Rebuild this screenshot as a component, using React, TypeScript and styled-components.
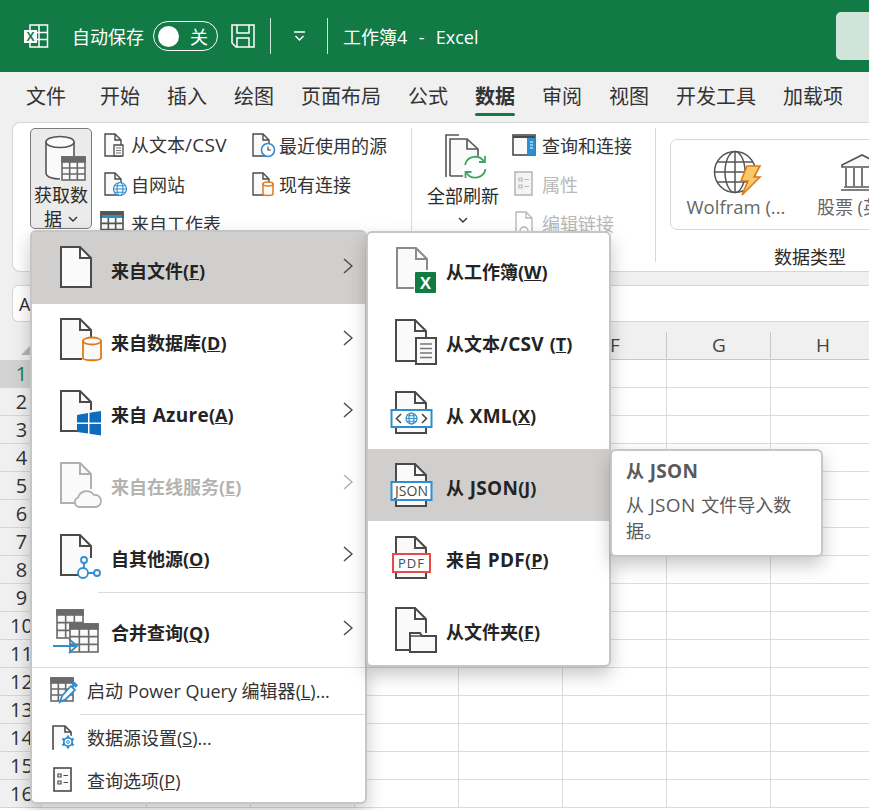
import { styled, createGlobalStyle } from "styled-components";
import type { ReactNode } from "react";

const FONT = `"Open Sans", "Noto Sans CJK SC", sans-serif`;
const INK = "#4a4a4a";
const BLUE = "#2e8fd0";
const ORANGE = "#e07a17";
const MUTED = "#b8b8b8";

const GlobalStyle = createGlobalStyle`
    html, body {
        margin: 0;
        padding: 0;
        width: 869px;
        height: 810px;
        overflow: hidden;
        background: #fff;
        font-family: ${FONT};
    }
`;

const Page = styled.div`
    position: relative;
    width: 869px;
    height: 810px;
    overflow: hidden;
    display: flex;
    flex-direction: column;
    background: #f0f0f0;
    color: #2b2b2b;
`;

/* latin runs sit a little larger next to the CJK text, as they do in the ribbon font */
const Latin = styled.span`
    font-size: 19px;
    letter-spacing: 0.3px;
`;

const TypeName = styled.span`
    font-size: 18.5px;
`;

/* ---------- title bar ---------- */

const TitleBar = styled.header`
    height: 72px;
    flex: none;
    display: flex;
    align-items: center;
    padding-left: 24px;
    background: #117a45;
    color: #fff;
    font-size: 18px;
    overflow: hidden;
`;

const AutoSave = styled.span`
    margin-left: 24px;
`;

const Toggle = styled.span`
    box-sizing: border-box;
    margin: 0 13px 0 9px;
    width: 65px;
    height: 30px;
    border: 1.5px solid #fff;
    border-radius: 15px;
    display: flex;
    align-items: center;
    padding: 0 9px 0 4px;
    justify-content: space-between;

    &::before {
        content: "";
        width: 21px;
        height: 21px;
        border-radius: 50%;
        background: #fff;
    }
`;

const TitleDivider = styled.span<{ $left: number; $right: number }>`
    width: 1px;
    height: 36px;
    background: #cfe4d9;
    margin: 0 ${(p) => p.$right}px 0 ${(p) => p.$left}px;
`;

const WindowTitle = styled.span`
    white-space: pre;
    word-spacing: 1px;
    margin-left: 15px;
`;

const SearchBox = styled.div`
    margin-left: auto;
    margin-right: -30px;
    flex: none;
    width: 63px;
    height: 48px;
    border-radius: 5px;
    background: #d0e4d9;
`;

/* ---------- tabs ---------- */

const TabRow = styled.nav`
    height: 50px;
    flex: none;
    display: flex;
    gap: 27px;
    padding-left: 26px;
    font-size: 20px;
`;

const Tab = styled.span<{ $active?: boolean; $extra?: number }>`
    position: relative;
    line-height: 50px;
    color: #333;
    font-weight: ${(p) => (p.$active ? 700 : 400)};
    margin-right: ${(p) => p.$extra ?? 0}px;

    ${(p) =>
        p.$active &&
        `&::after {
            content: "";
            position: absolute;
            left: 0;
            right: 0;
            bottom: 6px;
            height: 3px;
            border-radius: 2px;
            background: #117a45;
        }`}
`;

/* ---------- ribbon ---------- */

const Ribbon = styled.section`
    box-sizing: border-box;
    flex: none;
    height: 150px;
    margin-left: 12px;
    width: 900px;
    display: flex;
    padding: 5px 0 0 17px;
    background: #fff;
    border: 1px solid #d6d6d6;
    border-right: 0;
    border-radius: 8px 0 0 8px;
    overflow: hidden;
    font-size: 18px;
`;

const GetDataButton = styled.div`
    box-sizing: border-box;
    flex: none;
    width: 62px;
    height: 101px;
    border: 1px solid #7a7a7a;
    border-radius: 5px;
    background: #ebebeb;
    display: flex;
    flex-direction: column;
    align-items: center;
    padding-top: 6px;
    line-height: 24px;
    text-align: center;

    & > svg {
        margin-left: 8px;
    }
`;

const ButtonLabel = styled.span`
    margin-top: 2px;
    display: block;
    white-space: nowrap;
`;

const CaretLine = styled.span`
    display: flex;
    align-items: center;
    gap: 6px;
`;

const SmallColumn = styled.div<{ $width: number; $left: number }>`
    flex: none;
    width: ${(p) => p.$width}px;
    margin: -3px 0 0 ${(p) => p.$left}px;
    display: flex;
    flex-direction: column;
`;

const SmallButton = styled.div<{ $disabled?: boolean; $gap?: number }>`
    height: 39px;
    display: flex;
    align-items: center;
    gap: ${(p) => p.$gap ?? 4}px;
    white-space: nowrap;
    color: ${(p) => (p.$disabled ? MUTED : "#333")};
`;

const PropsIconSlot = styled.span`
    margin-left: -4px;
`;

const GroupLine = styled.span<{ $left: number }>`
    flex: none;
    width: 1px;
    height: 134px;
    margin-left: ${(p) => p.$left}px;
    background: #d9d9d9;
`;

const RefreshButton = styled.div`
    flex: none;
    width: 72px;
    margin-left: 15px;
    display: flex;
    flex-direction: column;
    align-items: center;
    padding-top: 6px;
    line-height: 24px;
    white-space: nowrap;

    & > svg:first-child {
        margin-left: 5px;
    }

    & > svg:last-child {
        margin-top: 9px;
    }

    & > span {
        margin-top: 4px;
    }
`;

const TypesGroup = styled.div`
    flex: none;
    margin: 11px 0 0 14px;
    display: flex;
    flex-direction: column;
`;

const TypesCard = styled.div`
    box-sizing: border-box;
    width: 280px;
    height: 91px;
    border: 1px solid #d9d9d9;
    border-radius: 7px;
    display: flex;
    color: #666;
`;

const TypeItem = styled.div<{ $width: number }>`
    flex: none;
    width: ${(p) => p.$width}px;
    display: flex;
    flex-direction: column;
    align-items: center;
    padding-top: 10px;
    line-height: 24px;
    white-space: nowrap;
`;

const GroupTitle = styled.div`
    width: 280px;
    text-align: center;
    line-height: 24px;
    margin-top: 15px;
`;

/* ---------- formula bar and sheet ---------- */

const FormulaBar = styled.div`
    box-sizing: border-box;
    flex: none;
    height: 37px;
    margin: 13px 0 0 12px;
    padding-left: 6px;
    display: flex;
    align-items: center;
    background: #fff;
    border: 1px solid #d6d6d6;
    border-right: 0;
    border-radius: 6px 0 0 6px;
    font-size: 18px;
`;

const Sheet = styled.div`
    flex: 1;
    display: grid;
    grid-template-columns: 43px repeat(8, 104px);
    grid-template-rows: 38px;
    grid-auto-rows: 28px;
    background: #fff;
    font-size: 19px;
`;

const Corner = styled.div`
    background: #f0f0f0;
    display: flex;
    align-items: flex-end;
    justify-content: flex-end;
    padding: 0 11px 5px 0;
    box-sizing: border-box;
`;

const ColumnHead = styled.div`
    box-sizing: border-box;
    padding-top: 10px;
    background: #f0f0f0;
    text-align: center;
    line-height: 27px;
    color: #444;
    border-bottom: 1px solid #c8c8c8;
    position: relative;

    &::after {
        content: "";
        position: absolute;
        right: 0;
        top: 10px;
        bottom: 0;
        width: 1px;
        background: #c8c8c8;
    }
`;

const SheetRow = styled.div`
    display: contents;
`;

const RowHead = styled.div<{ $selected?: boolean }>`
    box-sizing: border-box;
    text-align: center;
    line-height: 27px;
    font-size: 20px;
    border-bottom: 1px solid #d4d4d4;
    background: ${(p) => (p.$selected ? "#d2d2d2" : "#f0f0f0")};
    color: ${(p) => (p.$selected ? "#117a45" : "#333")};
`;

const Cell = styled.div`
    box-sizing: border-box;
    border-right: 1px solid #dcdcdc;
    border-bottom: 1px solid #dcdcdc;
`;

/* ---------- menus ---------- */

const Menu = styled.div`
    box-sizing: border-box;
    position: absolute;
    background: #fff;
    border: 2px solid #c6c6c6;
    border-radius: 6px;
    box-shadow: 0 8px 18px rgba(0, 0, 0, 0.22);
    overflow: hidden;
    display: flex;
    flex-direction: column;
`;

const MainMenu = styled(Menu)`
    left: 30px;
    top: 230px;
    width: 337px;
    height: 574px;
`;

const FileMenu = styled(Menu)`
    left: 366px;
    top: 231px;
    width: 245px;
    height: 436px;
`;

const BigItem = styled.div<{ $hover?: boolean; $disabled?: boolean; $left: number; $gap: number; $height?: number }>`
    flex: none;
    height: ${(p) => p.$height ?? 72}px;
    display: flex;
    align-items: center;
    gap: ${(p) => p.$gap}px;
    padding-left: ${(p) => p.$left}px;
    font-size: 18px;
    font-weight: 700;
    word-spacing: 1px;
    white-space: nowrap;
    background: ${(p) => (p.$hover ? "#d1cfcd" : "transparent")};
    color: ${(p) => (p.$disabled ? "#b5b3b1" : "#242424")};
`;

const ItemLabel = styled.span`
    flex: 1;
    line-height: 26px;
    padding-top: 6px;
`;

const Chevron = styled.svg`
    flex: none;
    margin: 0 12px 4px 0;
`;

const Rule = styled.div<{ $left?: number }>`
    flex: none;
    height: 1px;
    margin-left: ${(p) => p.$left ?? 0}px;
    background: #dcdcdc;
`;

const SmallItem = styled.div<{ $height: number; $lift?: number }>`
    box-sizing: border-box;
    flex: none;
    height: ${(p) => p.$height}px;
    display: flex;
    align-items: center;
    gap: 8px;
    padding: 0 0 ${(p) => p.$lift ?? 0}px 15px;
    font-size: 18px;
    color: #333;
    white-space: nowrap;
`;

const Tooltip = styled(Menu)`
    left: 610px;
    top: 449px;
    width: 213px;
    height: 108px;
    padding: 8px 14px;
    font-size: 18px;
    word-spacing: 1px;
    color: #5a5a5a;
    display: block;
`;

const TipTitle = styled.div`
    font-weight: 700;
    line-height: 25px;
    margin-bottom: 8px;
`;

const TipBody = styled.div`
    line-height: 26px;
`;

/* ---------- icons ---------- */

const Glyph = styled.svg`
    flex: none;
    display: block;
    overflow: visible;
`;

function Icon({ size = 48, h, children }: { size?: number; h?: number; children: ReactNode }) {
    return (
        <Glyph width={size} height={h ?? size} viewBox={`0 0 ${size} ${h ?? size}`} fill="none">
            {children}
        </Glyph>
    );
}

function Doc({ d, color = INK, x = 5, y = 3 }: { d?: string; color?: string; x?: number; y?: number }) {
    const body = d ?? "M0 0H19L30 11V40H0Z";
    return (
        <g transform={`translate(${x} ${y})`} stroke={color} strokeWidth="2" fill="#fafafa">
            <path d={body} />
            <path d="M19 0V11H30" fill="none" />
        </g>
    );
}

function TableGlyph({ x, y, w, h, color = "#6a6a6a" }: { x: number; y: number; w: number; h: number; color?: string }) {
    const cw = w / 3;
    const ch = (h - 5) / 3;
    return (
        <g stroke={color} strokeWidth="1.6">
            <rect x={x} y={y} width={w} height={h} fill="#fafafa" />
            <rect x={x} y={y} width={w} height={5} fill={color} />
            <path d={`M${x + cw} ${y + 5}V${y + h}M${x + 2 * cw} ${y + 5}V${y + h}M${x} ${y + 5 + ch}H${x + w}M${x} ${y + 5 + 2 * ch}H${x + w}`} />
        </g>
    );
}

function ExcelLogo() {
    return (
        <Icon size={24}>
            <g stroke="#fff" strokeWidth="1.5">
                <rect x="6" y="1" width="17.5" height="22" />
                <path d="M6 8.5H23.5M6 15.5H23.5M15 1V23" />
            </g>
            <rect x="0" y="6" width="13" height="13" fill="#fff" />
            <text x="6.5" y="16.5" textAnchor="middle" fontSize="12" fontWeight="700" fill="#117a45" fontFamily="Liberation Sans">X</text>
        </Icon>
    );
}

function SaveIcon() {
    return (
        <Icon size={24}>
            <g stroke="#fff" strokeWidth="1.5">
                <path d="M1 1H23V23H5L1 19Z" />
                <path d="M6 1V9H18V1M6 23V14H18V23" />
            </g>
        </Icon>
    );
}

function CustomizeArrow() {
    return (
        <Glyph width={11} height={10} viewBox="0 0 11 10" fill="none" stroke="#fff" strokeWidth="1.5">
            <path d="M0 1H11M1.5 5L5.5 9L9.5 5" />
        </Glyph>
    );
}

function DownCaret() {
    return (
        <Glyph width={10} height={6} viewBox="0 0 10 6" fill="none" stroke="#333" strokeWidth="1.4">
            <path d="M1 1L5 5L9 1" />
        </Glyph>
    );
}

function GetDataIcon() {
    return (
        <Icon size={42} h={46}>
            <path d="M30 7V21H18V44H16C9 44 2 42 2 38V7" fill="#fafafa" />
            <path d="M2 38V7M30 7V21M2 38C2 42 9 44 16 44" stroke="#555" strokeWidth="1.6" />
            <ellipse cx="16" cy="7" rx="14" ry="5.5" stroke="#555" strokeWidth="1.6" fill="#fafafa" />
            <TableGlyph x={18} y={22} w={23} h={23} />
        </Icon>
    );
}

function TinyDoc({ children }: { children?: ReactNode }) {
    return (
        <Icon size={24}>
            <g stroke={INK} strokeWidth="1.4" fill="#fafafa">
                <path d="M2 1H12L18 7V23H2Z" />
                <path d="M12 1V7H18" fill="none" />
            </g>
            {children}
        </Icon>
    );
}

function TinyGlobe({ x = 17, y = 17, r = 6.5, c = BLUE }: { x?: number; y?: number; r?: number; c?: string }) {
    return (
        <g stroke={c} strokeWidth="1.2" fill="#fff">
            <circle cx={x} cy={y} r={r} />
            <ellipse cx={x} cy={y} rx={r / 2.2} ry={r} fill="none" />
            <path d={`M${x - r} ${y}H${x + r}M${x - r + 1} ${y - r / 2}H${x + r - 1}M${x - r + 1} ${y + r / 2}H${x + r - 1}`} />
        </g>
    );
}

function WorksheetIcon() {
    return (
        <Icon size={24}>
            <TableGlyph x={-2} y={1} w={22} h={24} color="#555" />
            <rect x="-1" y="4" width="20" height="3" fill={BLUE} />
        </Icon>
    );
}

function PaneIcon() {
    return (
        <Icon size={24} h={22}>
            <rect x="1" y="1" width="22" height="20" stroke={INK} strokeWidth="1.6" fill="#fafafa" />
            <path d="M1 3H23" stroke={INK} strokeWidth="2" />
            <rect x="15" y="4" width="8" height="17" fill={BLUE} />
            <path d="M18 8H21M18 11H21M18 14H21" stroke="#fff" strokeWidth="1.2" />
        </Icon>
    );
}

function RefreshIcon() {
    return (
        <Icon size={42} h={46}>
            <path d="M1 43V1H14" stroke="#555" strokeWidth="1.6" />
            <path d="M5 42V5H22L33 15V28M5 42H18" stroke="#555" strokeWidth="1.6" fill="#fafafa" />
            <path d="M22 5V15H33" stroke="#555" strokeWidth="1.6" />
            <circle cx="30" cy="33" r="11.5" fill="#fff" />
            <path d="M20 31A10.5 10.5 0 0 1 39 27.5M40.5 35A10.5 10.5 0 0 1 21.5 39" stroke="#3fa564" strokeWidth="1.8" />
            <path d="M40 22V28H34M20.5 44V38H26.5" stroke="#3fa564" strokeWidth="1.8" />
        </Icon>
    );
}

function WolframIcon() {
    return (
        <Icon size={48} h={45}>
            <g stroke="#555" strokeWidth="1.5" transform="translate(1 0)">
                <circle cx="22" cy="22" r="20.5" />
                <ellipse cx="22" cy="22" rx="10" ry="20.5" />
                <path d="M22 1.5V42.5M1.5 22H42.5M4 12H40M4 32H36" />
            </g>
            <path d="M35 16H48L42 27H48L30 45L36 31H29Z" fill="#f8c96a" stroke={ORANGE} strokeWidth="1.6" />
        </Icon>
    );
}

function BankIcon() {
    return (
        <Icon size={48} h={45}>
            <g stroke="#555" strokeWidth="1.6" transform="translate(7 4)">
                <path d="M3 11L23 1L43 11V13H3Z" fill="#fafafa" />
                <path d="M7 14V32M15 14V32M23 14V32M31 14V32M39 14V32" />
                <path d="M2 36H44M5 33H41" />
            </g>
        </Icon>
    );
}

function ChevronRight({ color = INK }: { color?: string }) {
    return (
        <Chevron width={10} height={16} viewBox="0 0 10 16" fill="none" stroke={color} strokeWidth="1.5">
            <path d="M1 1L9 8L1 15" />
        </Chevron>
    );
}

function FileOnly() {
    return <Icon><Doc /></Icon>;
}

function DatabaseFile() {
    return (
        <Icon>
            <Doc d="M21 40H0V0H19L30 11V18" />
            <path d="M27 25V42C27 45 45 45 45 42V25Z" fill="#fafafa" stroke={ORANGE} strokeWidth="1.8" />
            <ellipse cx="36" cy="25" rx="9" ry="3.5" fill="#fafafa" stroke={ORANGE} strokeWidth="1.8" />
        </Icon>
    );
}

function AzureFile() {
    return (
        <Icon>
            <Doc d="M16 40H0V0H19L30 11V19" />
            <path d="M21 27L32 25V34.5H21ZM33.5 24.7L45 23V34.5H33.5ZM21 36H32V45.5L21 44ZM33.5 36H45V47.5L33.5 45.7Z" fill="#0f6cbd" />
        </Icon>
    );
}

function OnlineFile() {
    return (
        <Icon>
            <Doc d="M14 40H0V0H19L30 11V26" color="#b0b0b0" />
            <path d="M23 47A5 5 0 0 1 22 37.5A9 9 0 0 1 38 35A6 6 0 0 1 40 47Z" fill="#fafafa" stroke="#b0b0b0" strokeWidth="1.8" />
        </Icon>
    );
}

function OtherFile() {
    return (
        <Icon>
            <Doc d="M22 40H0V0H19L30 11V23" />
            <g stroke={BLUE} strokeWidth="1.8" fill="#fff">
                <path d="M28 31V36M32 41H38" />
                <circle cx="28" cy="28" r="3" />
                <circle cx="27" cy="41" r="5" />
                <circle cx="41" cy="41" r="3" />
            </g>
        </Icon>
    );
}

function MergeIcon() {
    return (
        <Icon>
            <TableGlyph x={1} y={4} w={26} h={28} />
            <TableGlyph x={14} y={18} w={28} h={28} />
            <path d="M-3 40H20M13 33L21 40L13 47" stroke={BLUE} strokeWidth="1.8" />
        </Icon>
    );
}

function EditorIcon() {
    return (
        <Icon size={32}>
            <TableGlyph x={4} y={4} w={22} h={23} />
            <path d="M13 28L15 22L24 12L28 16L19 25Z" fill="#fff" stroke={BLUE} strokeWidth="1.8" />
            <path d="M24.5 9.5L26.5 7.5L30.5 11L28.5 13.5" fill={BLUE} stroke={BLUE} />
        </Icon>
    );
}

const GEAR_ANGLES = [0, 60, 120, 180, 240, 300];

function SourceSettingsIcon() {
    return (
        <Icon size={32}>
            <g stroke={INK} strokeWidth="1.6" fill="#fafafa">
                <path d="M7 28H6V5H18L24 11V15" />
                <path d="M18 5V11H24" fill="none" />
            </g>
            <circle cx="21" cy="21" r="7" fill="#fff" />
            <g stroke={BLUE}>
                <circle cx="21" cy="21" r="4.2" strokeWidth="1.8" />
                <circle cx="21" cy="21" r="1.4" strokeWidth="1" />
                {GEAR_ANGLES.map((a) => (
                    <path key={a} d="M21 14.5V17" strokeWidth="2.4" transform={`rotate(${a} 21 21)`} />
                ))}
            </g>
        </Icon>
    );
}

function OptionsIcon({ color = INK, fill = "#fafafa" }: { color?: string; fill?: string }) {
    return (
        <Icon size={32}>
            <rect x="7" y="4" width="17" height="23" stroke={color} strokeWidth="1.6" fill={fill} />
            <path d="M11 10H14V13H11ZM11 17H14V20H11Z" stroke={color} strokeWidth="1.2" />
            <path d="M16.5 11.5H21M16.5 18.5H21" stroke={color} strokeWidth="1.2" />
        </Icon>
    );
}

function WorkbookIcon() {
    return (
        <Icon>
            <Doc x={9} d="M17 40H0V0H19L30 11V22" color="#8a8a8a" />
            <rect x="27" y="27" width="21" height="21" rx="1" fill="#107c41" />
            <text x="37.5" y="43.5" textAnchor="middle" fontSize="17" fontWeight="700" fill="#fff" fontFamily="Liberation Sans">X</text>
        </Icon>
    );
}

function TextFileIcon() {
    return (
        <Icon>
            <Doc x={8} d="M19 41H0V0H19L30 11V17" />
            <rect x="28" y="21" width="20" height="26" fill="#fafafa" stroke={INK} strokeWidth="2" />
            <path d="M32 27H44M32 31.5H44M32 36H44M32 40.5H44" stroke="#777" strokeWidth="1.5" />
        </Icon>
    );
}

function XmlIcon() {
    return (
        <Icon>
            <Doc x={8} d="M0 41V0H19L30 11V41Z" />
            <rect x="3.5" y="21" width="40" height="17" fill="#fff" stroke={BLUE} strokeWidth="2" />
            <path d="M13 25L8.5 29.5L13 34M34 25L38.5 29.5L34 34" stroke={INK} strokeWidth="1.6" />
            <TinyGlobe x={23.5} y={29.5} r={5.5} />
        </Icon>
    );
}

function JsonIcon() {
    return (
        <Icon>
            <Doc x={8} d="M0 42V0H19L30 11V42Z" />
            <rect x="3.5" y="21" width="40" height="18" fill="#fff" stroke={BLUE} strokeWidth="2" />
            <text x="23.5" y="35" textAnchor="middle" fontSize="14" fontWeight="400" fill={INK} fontFamily="Open Sans">JSON</text>
        </Icon>
    );
}

function PdfIcon() {
    return (
        <Icon>
            <Doc x={8} y={4} d="M0 41V0H19L30 11V41Z" />
            <rect x="5" y="21" width="37" height="18" fill="#fff" stroke="#e64a4a" strokeWidth="2" />
            <text x="23.5" y="35" textAnchor="middle" fontSize="13" fontWeight="400" letterSpacing="1" fill={INK} fontFamily="Open Sans">PDF</text>
        </Icon>
    );
}

function FolderFileIcon() {
    return (
        <Icon>
            <Doc x={8} d="M14 42H0V0H19L30 11V25" />
            <path d="M22 47V28H32L34 31H48V47Z" fill="#fafafa" stroke={INK} strokeWidth="2" />
            <path d="M22 31H34" stroke={INK} strokeWidth="1.5" />
        </Icon>
    );
}

/* ---------- data ---------- */

const TABS = ["文件", "开始", "插入", "绘图", "页面布局", "公式", "数据", "审阅", "视图", "开发工具", "加载项"];
const COLUMNS = ["A", "B", "C", "D", "E", "F", "G", "H"];
const ROWS = Array.from({ length: 16 }, (_, i) => i + 1);

function Key({ text, k, after }: { text: ReactNode; k: string; after?: string }) {
    return (
        <>
            {text}(<u>{k}</u>){after}
        </>
    );
}

export default function App() {
    return (
        <Page>
            <GlobalStyle />

            <TitleBar>
                <ExcelLogo />
                <AutoSave>自动保存</AutoSave>
                <Toggle>关</Toggle>
                <SaveIcon />
                <TitleDivider $left={15} $right={23} />
                <CustomizeArrow />
                <TitleDivider $left={22} $right={0} />
                <WindowTitle>工作簿4  -  Excel</WindowTitle>
                <SearchBox />
            </TitleBar>

            <TabRow>
                {TABS.map((t, i) => (
                    <Tab key={t} $active={t === "数据"} $extra={i === 0 ? 7 : 0}>{t}</Tab>
                ))}
            </TabRow>

            <Ribbon>
                <GetDataButton>
                    <GetDataIcon />
                    <ButtonLabel>获取数</ButtonLabel>
                    <CaretLine>据<DownCaret /></CaretLine>
                </GetDataButton>

                <SmallColumn $width={148} $left={11}>
                    <SmallButton><TinyDoc><path d="M11 12H20V23H11Z" fill="#fafafa" stroke={INK} strokeWidth="1.3" /><path d="M13 15H18M13 17.5H18M13 20H18" stroke="#777" /></TinyDoc><span>从文本<Latin>/CSV</Latin></span></SmallButton>
                    <SmallButton><TinyDoc><TinyGlobe /></TinyDoc>自网站</SmallButton>
                    <SmallButton><WorksheetIcon />来自工作表</SmallButton>
                </SmallColumn>

                <SmallColumn $width={144} $left={0}>
                    <SmallButton><TinyDoc><circle cx="17" cy="17" r="6.5" fill="#fff" stroke={BLUE} strokeWidth="1.6" /><path d="M17 13.5V17H20" stroke={INK} strokeWidth="1.2" /></TinyDoc>最近使用的源</SmallButton>
                    <SmallButton><TinyDoc><path d="M12 12V22C12 24 22 24 22 22V12Z" fill="#fafafa" stroke={ORANGE} strokeWidth="1.5" /><ellipse cx="17" cy="12" rx="5" ry="2" fill="#fafafa" stroke={ORANGE} strokeWidth="1.5" /></TinyDoc>现有连接</SmallButton>
                </SmallColumn>

                <GroupLine $left={16} />

                <RefreshButton>
                    <RefreshIcon />
                    <ButtonLabel>全部刷新</ButtonLabel>
                    <DownCaret />
                </RefreshButton>

                <SmallColumn $width={128} $left={13}>
                    <SmallButton $gap={6}><PaneIcon />查询和连接</SmallButton>
                    <SmallButton $disabled $gap={2}><PropsIconSlot><OptionsIcon color={MUTED} fill="#f4f4f4" /></PropsIconSlot>属性</SmallButton>
                    <SmallButton $disabled $gap={6}>
                        <Icon size={24}>
                            <g stroke={MUTED} strokeWidth="1.4">
                                <path d="M4 1H14L20 7V23H4Z" />
                                <path d="M14 1V7H20" />
                                <circle cx="12" cy="20" r="4" />
                            </g>
                        </Icon>
                        编辑链接
                    </SmallButton>
                </SmallColumn>

                <GroupLine $left={15} />

                <TypesGroup>
                    <TypesCard>
                        <TypeItem $width={130}><WolframIcon /><TypeName>Wolfram (...</TypeName></TypeItem>
                        <TypeItem $width={110}><BankIcon />股票 (英...</TypeItem>
                    </TypesCard>
                    <GroupTitle>数据类型</GroupTitle>
                </TypesGroup>
            </Ribbon>

            <FormulaBar>A1</FormulaBar>

            <Sheet>
                <SheetRow>
                    <Corner>
                        <Glyph width={11} height={11} viewBox="0 0 11 11"><path d="M11 0V11H0Z" fill="#b5b5b5" /></Glyph>
                    </Corner>
                    {COLUMNS.map((c) => <ColumnHead key={c}>{c}</ColumnHead>)}
                </SheetRow>
                {ROWS.map((r) => (
                    <SheetRow key={r}>
                        <RowHead $selected={r === 1}>{r}</RowHead>
                        {COLUMNS.map((c) => <Cell key={c} />)}
                    </SheetRow>
                ))}
            </Sheet>

            <MainMenu>
                <BigItem $hover $left={24} $gap={7}><FileOnly /><ItemLabel><Key text="来自文件" k="F" /></ItemLabel><ChevronRight /></BigItem>
                <BigItem $left={24} $gap={7}><DatabaseFile /><ItemLabel><Key text="来自数据库" k="D" /></ItemLabel><ChevronRight /></BigItem>
                <BigItem $left={24} $gap={7}><AzureFile /><ItemLabel><Key text={<>来自 <Latin>Azure</Latin></>} k="A" /></ItemLabel><ChevronRight /></BigItem>
                <BigItem $disabled $left={24} $gap={7}><OnlineFile /><ItemLabel><Key text="来自在线服务" k="E" /></ItemLabel><ChevronRight color="#b0b0b0" /></BigItem>
                <BigItem $left={24} $gap={7}><OtherFile /><ItemLabel><Key text="自其他源" k="O" /></ItemLabel><ChevronRight /></BigItem>
                <Rule $left={66} />
                <BigItem $left={24} $gap={7} $height={74}><MergeIcon /><ItemLabel><Key text="合并查询" k="Q" /></ItemLabel><ChevronRight /></BigItem>
                <Rule />
                <SmallItem $height={46} $lift={2}><EditorIcon /><span><Key text="启动 Power Query 编辑器" k="L" after="..." /></span></SmallItem>
                <Rule $left={48} />
                <SmallItem $height={44}><SourceSettingsIcon /><span><Key text="数据源设置" k="S" after="..." /></span></SmallItem>
                <SmallItem $height={44} $lift={2}><OptionsIcon /><span><Key text="查询选项" k="P" /></span></SmallItem>
            </MainMenu>

            <FileMenu>
                <BigItem $left={20} $gap={10}><WorkbookIcon /><ItemLabel><Key text="从工作簿" k="W" /></ItemLabel></BigItem>
                <BigItem $left={20} $gap={10}><TextFileIcon /><ItemLabel>从文本<Latin>/CSV</Latin> (<u>T</u>)</ItemLabel></BigItem>
                <BigItem $left={20} $gap={10}><XmlIcon /><ItemLabel><Key text={<>从 <Latin>XML</Latin></>} k="X" /></ItemLabel></BigItem>
                <BigItem $hover $left={20} $gap={10}><JsonIcon /><ItemLabel><Key text={<>从 <Latin>JSON</Latin></>} k="J" /></ItemLabel></BigItem>
                <BigItem $left={20} $gap={10}><PdfIcon /><ItemLabel><Key text={<>来自 <Latin>PDF</Latin></>} k="P" /></ItemLabel></BigItem>
                <BigItem $left={20} $gap={10}><FolderFileIcon /><ItemLabel><Key text="从文件夹" k="F" /></ItemLabel></BigItem>
            </FileMenu>

            <Tooltip>
                <TipTitle>从 <Latin>JSON</Latin></TipTitle>
                <TipBody>从 <Latin>JSON</Latin> 文件导入数据。</TipBody>
            </Tooltip>
        </Page>
    );
}
